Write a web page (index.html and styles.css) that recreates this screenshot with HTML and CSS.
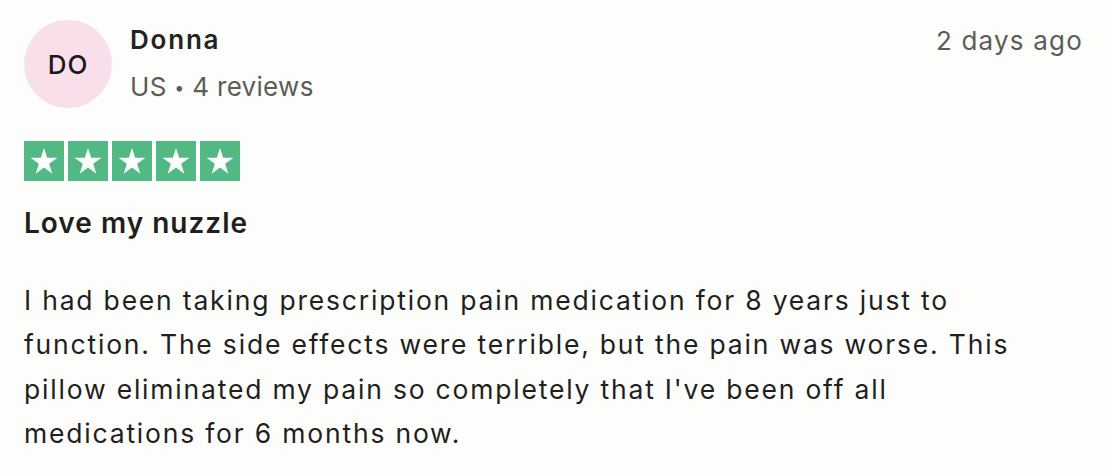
FILE: index.html
```html
<!DOCTYPE html>
<html lang="en">
<head>
<meta charset="utf-8">
<title>Review</title>
<link rel="stylesheet" href="styles.css">
</head>
<body>
<article class="review">
  <header class="review-header">
    <div class="avatar">DO</div>
    <div class="consumer">
      <div class="consumer-name">Donna</div>
      <div class="consumer-meta">US <span class="dot">•</span> 4 reviews</div>
    </div>
    <time class="review-date">2 days ago</time>
  </header>
  <div class="stars" aria-label="Rated 5 out of 5">
    <span class="star"><svg viewBox="0 0 40 40"><path d="M20 7L23.19 16.81L33.5 16.8L25.15 22.87L28.35 32.69L20 26.62L11.65 32.69L14.85 22.87L6.5 16.8L16.81 16.81Z" fill="#fff"/></svg></span>
    <span class="star"><svg viewBox="0 0 40 40"><path d="M20 7L23.19 16.81L33.5 16.8L25.15 22.87L28.35 32.69L20 26.62L11.65 32.69L14.85 22.87L6.5 16.8L16.81 16.81Z" fill="#fff"/></svg></span>
    <span class="star"><svg viewBox="0 0 40 40"><path d="M20 7L23.19 16.81L33.5 16.8L25.15 22.87L28.35 32.69L20 26.62L11.65 32.69L14.85 22.87L6.5 16.8L16.81 16.81Z" fill="#fff"/></svg></span>
    <span class="star"><svg viewBox="0 0 40 40"><path d="M20 7L23.19 16.81L33.5 16.8L25.15 22.87L28.35 32.69L20 26.62L11.65 32.69L14.85 22.87L6.5 16.8L16.81 16.81Z" fill="#fff"/></svg></span>
    <span class="star"><svg viewBox="0 0 40 40"><path d="M20 7L23.19 16.81L33.5 16.8L25.15 22.87L28.35 32.69L20 26.62L11.65 32.69L14.85 22.87L6.5 16.8L16.81 16.81Z" fill="#fff"/></svg></span>
  </div>
  <h2 class="review-title">Love my nuzzle</h2>
  <p class="review-text">I had been taking prescription pain medication for 8 years just to function. The side effects were terrible, but the pain was worse. This pillow eliminated my pain so completely that I've been off all medications for 6 months now.</p>
</article>
</body>
</html>
```

FILE: styles.css
```css
html, body {
  margin: 0;
  padding: 0;
  background: #fdfdfc;
}
body {
  font-family: Inter, "Noto Sans", sans-serif;
  color: #1f1f1d;
}
.review {
  padding: 20px 23px 0 24px;
}
.review-header {
  display: flex;
  align-items: flex-start;
}
.avatar {
  width: 88px;
  height: 88px;
  border-radius: 50%;
  background: #f9dfe9;
  display: flex;
  align-items: center;
  justify-content: center;
  font-size: 26px;
  font-weight: 500;
  letter-spacing: 1px;
  color: #1a1a1a;
  flex-shrink: 0;
}
.consumer {
  margin-left: 18px;
  display: flex;
  flex-direction: column;
}
.consumer-name {
  font-size: 26px;
  font-weight: 600;
  line-height: 40px;
  letter-spacing: 1.8px;
  color: #232321;
}
.consumer-meta {
  margin-top: 7px;
  font-size: 26px;
  line-height: 40px;
  letter-spacing: 0.3px;
  color: #5c5c58;
}
.dot {
  font-size: 18px;
  vertical-align: 2px;
}
.review-date {
  margin-left: auto;
  margin-top: 1px;
  font-size: 26px;
  line-height: 40px;
  letter-spacing: 1.2px;
  color: #5c5c58;
}
.stars {
  display: flex;
  gap: 4px;
  margin-top: 33px;
}
.star {
  width: 40px;
  height: 40px;
  background: #52b985;
  display: block;
}
.star svg {
  width: 40px;
  height: 40px;
  display: block;
}
.review-title {
  margin: 25px 0 0 0;
  font-size: 28px;
  font-weight: 600;
  line-height: 34px;
  letter-spacing: 1px;
}
.review-text {
  margin: 37.5px 0 0 0;
  font-size: 26.5px;
  font-weight: 400;
  line-height: 44.5px;
  letter-spacing: 1.8px;
  max-width: 1030px;
}
```
